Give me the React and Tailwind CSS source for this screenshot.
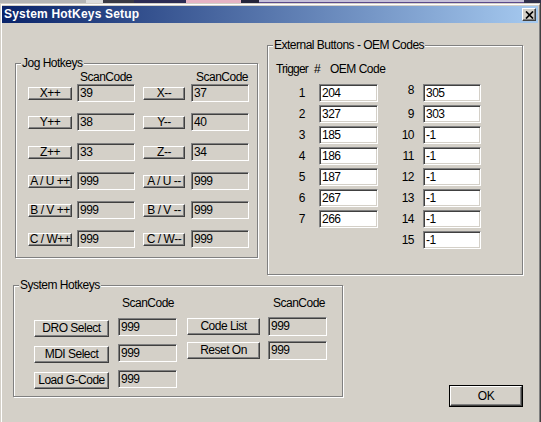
import React from 'react';

const jogRows = [
  ['X++', '39', 'X--', '37'],
  ['Y++', '38', 'Y--', '40'],
  ['Z++', '33', 'Z--', '34'],
  ['A / U ++', '999', 'A / U --', '999'],
  ['B / V ++', '999', 'B / V --', '999'],
  ['C / W++', '999', 'C / W--', '999'],
];

const oemLeft = [
  ['1', '204'], ['2', '327'], ['3', '185'], ['4', '186'],
  ['5', '187'], ['6', '267'], ['7', '266'],
];

const oemRight = [
  ['8', '305'], ['9', '303'], ['10', '-1'], ['11', '-1'],
  ['12', '-1'], ['13', '-1'], ['14', '-1'], ['15', '-1'],
];

// classic win9x bevels
const raised =
  'bg-[#d4d0c8] border border-t-white border-l-white border-b-[#404040] border-r-[#404040] shadow-[inset_-1px_-1px_0_#808080]';
const sunkenGray =
  'bg-[#d4d0c8] border border-t-[#808080] border-l-[#808080] border-b-white border-r-white shadow-[inset_1px_1px_0_#404040]';
const sunkenWhite =
  'bg-white border border-t-[#808080] border-l-[#808080] border-b-white border-r-white shadow-[inset_1px_1px_0_#404040,inset_-1px_-1px_0_#d4d0c8]';

const GroupBox = ({ label, className = '', children }) => (
  <div className={`relative border border-[#808080] shadow-[inset_1px_1px_0_#fff,1px_1px_0_#fff] ${className}`}>
    <span className="absolute left-[5px] top-[-8px] bg-[#d4d0c8] px-[1px] leading-[14px] whitespace-nowrap">
      {label}
    </span>
    {children}
  </div>
);

const Field = ({ value, className = '', white = false }) => (
  <div className={`${white ? sunkenWhite : sunkenGray} pl-[2px] leading-[16px] whitespace-nowrap ${className}`}>
    {value}
  </div>
);

const JogRow = ({ row, extra = '' }) => (
  <div className={`flex items-center h-[18px] ${extra}`}>
    <div className={`${raised} w-[44px] h-[13px] leading-[11px] text-center whitespace-nowrap overflow-hidden`}>{row[0]}</div>
    <Field value={row[1]} className="ml-[5px] w-[58px] h-[18px]" />
    <div className={`${raised} ml-[8px] w-[42px] h-[13px] leading-[11px] text-center whitespace-nowrap overflow-hidden`}>{row[2]}</div>
    <Field value={row[3]} className="ml-[6px] w-[58px] h-[18px]" />
  </div>
);

export default function App() {
  return (
    <div className="font-['Liberation_Sans',Arial,sans-serif] text-[12px] tracking-[-0.5px] text-black bg-[#d4d0c8] w-[541px] h-[422px] overflow-hidden">
      {/* bit of desktop above the dialog */}
      <div className="flex h-[3px]">
        <div className="w-[86px] bg-[#b4b4b4]" />
        <div className="w-[17px] bg-[#dcdcdc]" />
        <div className="w-[31px] bg-[#3a3a44]" />
        <div className="w-[52px] bg-[#2c2c54]" />
        <div className="w-[55px] bg-[#e6b4c4]" />
        <div className="w-[18px] bg-[#24243a]" />
        <div className="w-[265px] bg-[#c6c0d8] border-b border-[#5a4a8a]" />
        <div className="flex-1 bg-[#30304a]" />
      </div>

      {/* window frame */}
      <div className="h-[419px] pl-[1px] pt-[1px] border-r border-r-[#404040]">
        <div className="h-full flex flex-col border-l border-t border-l-white border-t-white border-r border-r-[#808080] pt-[1px]">
          {/* title bar */}
          <div className="h-[17px] mr-[1px] flex items-center justify-between pl-[2px] pr-[2px] bg-[linear-gradient(to_right,#0a246a,#a6caf0)]">
            <span className="text-white font-bold tracking-[0.2px] leading-[17px]">System HotKeys Setup</span>
            <div className={`${raised} w-[14px] h-[13px] flex items-center justify-center`}>
              <svg width="9" height="8" viewBox="0 0 9 8">
                <path d="M1 0.5 L8 7.5 M8 0.5 L1 7.5" stroke="#000" strokeWidth="1.7" />
              </svg>
            </div>
          </div>

          {/* top section */}
          <div className="flex items-start h-[252px]">
            <GroupBox label="Jog Hotkeys" className="ml-[13px] mt-[40px] w-[243px] h-[195px] pt-[6px] pl-[12px]">
              <div className="flex h-[14px] leading-[14px]">
                <span className="ml-[52px] w-[116px]">ScanCode</span>
                <span>ScanCode</span>
              </div>
              <div className="flex flex-col gap-[11px]">
                {jogRows.map((row, i) => (
                  <JogRow key={i} row={row} extra={i === 1 ? 'mb-[1px]' : ''} />
                ))}
              </div>
            </GroupBox>

            <GroupBox label="External Buttons - OEM Codes" className="ml-[9px] mt-[22px] w-[256px] h-[230px] pt-[16px] pl-[8px]">
              <div className="flex h-[14px] leading-[14px]">
                <span className="w-[38px] tracking-[-0.8px]">Trigger</span>
                <span className="w-[16px]">#</span>
                <span>OEM Code</span>
              </div>
              <div className="flex items-start mt-[8px]">
                <div className="flex flex-col gap-[3px]">
                  {oemLeft.map(([n, v]) => (
                    <div key={n} className="flex items-center h-[18px]">
                      <span className="w-[29px] text-right">{n}</span>
                      <Field white value={v} className="ml-[14px] w-[59px] h-[18px]" />
                    </div>
                  ))}
                </div>
                <div className="flex flex-col gap-[3px]">
                  {oemRight.map(([n, v]) => (
                    <div key={n} className={`flex h-[18px] ${n === '8' ? 'items-start' : 'items-center'}`}>
                      <span className="w-[36px] text-right leading-[12px]">{n}</span>
                      <Field white value={v} className="ml-[9px] w-[58px] h-[18px]" />
                    </div>
                  ))}
                </div>
              </div>
            </GroupBox>
          </div>

          {/* bottom section */}
          <div className="flex items-start">
            <GroupBox label="System Hotkeys" className="ml-[11px] mt-[10px] w-[330px] h-[112px] pt-[10px] pl-[20px] flex items-start">
              <div className="flex flex-col">
                <span className="ml-[88px] h-[14px] leading-[14px]">ScanCode</span>
                <div className="flex flex-col gap-[7px] mt-[8px]">
                  {['DRO Select', 'MDI Select', 'Load G-Code'].map((b) => (
                    <div key={b} className="flex items-start h-[19px]">
                      <div className={`${raised} mt-[2px] w-[75px] h-[17px] leading-[15px] text-center whitespace-nowrap`}>{b}</div>
                      <Field value="999" className="ml-[9px] w-[59px] h-[18px]" />
                    </div>
                  ))}
                </div>
              </div>
              <div className="flex flex-col ml-[10px]">
                <span className="ml-[86px] h-[14px] leading-[14px]">ScanCode</span>
                <div className="flex flex-col gap-[5px] mt-[7px]">
                  {['Code List', 'Reset On'].map((b) => (
                    <div key={b} className="flex items-start h-[19px]">
                      <div className={`${raised} mt-[1px] w-[73px] h-[17px] leading-[15px] text-center whitespace-nowrap`}>{b}</div>
                      <Field value="999" className="ml-[8px] w-[59px] h-[19px]" />
                    </div>
                  ))}
                </div>
              </div>
            </GroupBox>

            <div className="ml-[106px] mt-[110px] w-[74px] h-[22px] border border-black">
              <div className={`${raised} h-full flex items-center justify-center`}>OK</div>
            </div>
          </div>
        </div>
      </div>
    </div>
  );
}
